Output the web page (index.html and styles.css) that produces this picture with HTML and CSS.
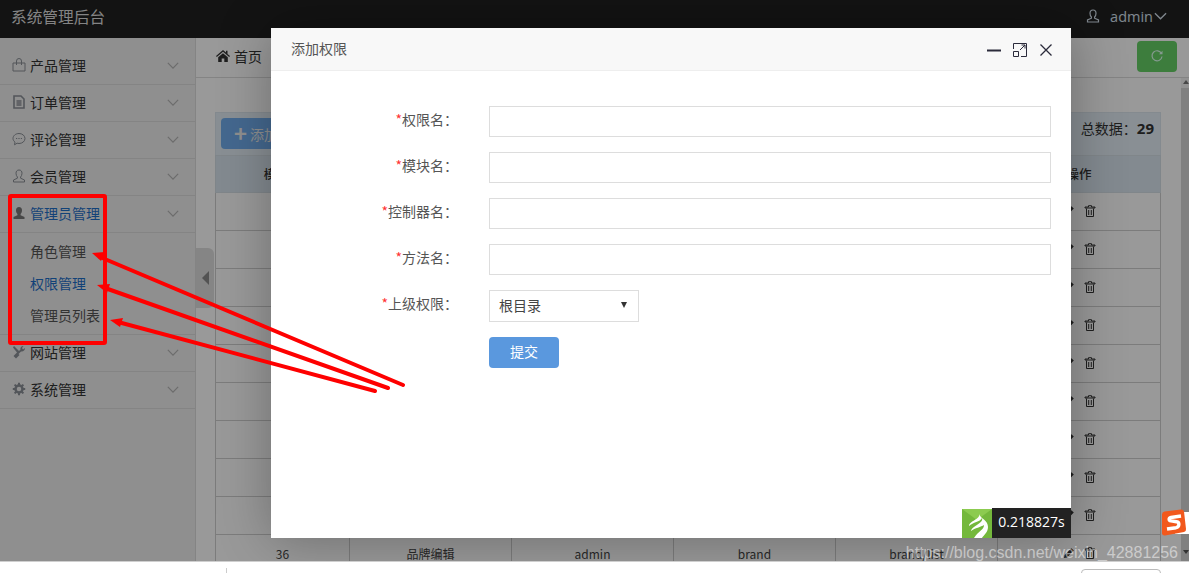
FILE: index.html
```html
<!DOCTYPE html>
<html lang="zh-CN">
  <head>
    <meta charset="UTF-8" />
    <meta name="viewport" content="width=device-width, initial-scale=1.0" />
    <title>系统管理后台</title>
    <link rel="stylesheet" href="styles.css">
  </head>
  <body>
    <svg class="defs" width="0" height="0">
      <symbol id="chev" viewBox="0 0 14 8"><path d="M1 1l6 6 6-6" fill="none" stroke="currentColor" stroke-width="1.400" /></symbol>
      <symbol id="edit" viewBox="0 0 12 12"><path d="M1 11l.6-3L8.4 1.200l2.400 2.400L4 10.400z" fill="currentColor" /></symbol>
      <symbol id="trash" viewBox="0 0 12 12"><path d="M4.500.7h3V2H11v1H1V2h3.500zM2.500 3.500v8h7v-8M4.700 5v5M7.300 5v5" fill="none" stroke="currentColor" /></symbol>
    </svg>

    <div class="page">
      <header class="topbar">
        <div class="brand">系统管理后台</div>
        <div class="user">
          <svg class="user-icon" viewBox="0 0 14 14"><path d="M7 1c-2 0-3 1.400-3 3.200 0 1.600.6 3 1.400 3.800v1.200L1.500 11v2h11v-2L8.600 9.200V8c.8-.8 1.400-2.200 1.400-3.800C10 2.400 9 1 7 1z" fill="none" stroke="currentColor" stroke-width="1.200" /></svg>
          <span>admin</span>
          <svg class="user-chev"><use href="#chev" /></svg>
        </div>
      </header>

      <div class="layout">
        <nav class="sidebar">
          <div class="menu-item">
            <svg class="menu-icon" viewBox="0 0 14 14"><path d="M1 5h12v8H1zM4.500 7V3a2.500 2.500 0 0 1 5 0v4" fill="none" stroke="currentColor" /></svg>
            <span>产品管理</span><svg class="chev"><use href="#chev" /></svg>
          </div>
          <div class="menu-item">
            <svg class="menu-icon" viewBox="0 0 14 14"><path d="M2 1h7l3 3v9H2zM4.500 6h5M4.500 8h5M4.500 10h5" fill="none" stroke="currentColor" stroke-width="1.600" /></svg>
            <span>订单管理</span><svg class="chev"><use href="#chev" /></svg>
          </div>
          <div class="menu-item">
            <svg class="menu-icon" viewBox="0 0 14 14"><path d="M7 1.500c3.300 0 6 2.200 6 5s-2.700 5-6 5c-.7 0-1.300-.1-1.900-.3L2.500 12.800l.5-2.700C1.800 9.200 1 7.900 1 6.500c0-2.800 2.700-5 6-5z" fill="none" stroke="currentColor" /><path d="M4 6.500h1.200M6.400 6.500h1.200M8.800 6.500H10" stroke="currentColor" /></svg>
            <span>评论管理</span><svg class="chev"><use href="#chev" /></svg>
          </div>
          <div class="menu-item">
            <svg class="menu-icon" viewBox="0 0 14 14"><path d="M7 1c-2 0-3 1.400-3 3.200 0 1.600.6 3 1.400 3.800v1.200L1.500 11v2h11v-2L8.600 9.200V8c.8-.8 1.400-2.200 1.400-3.800C10 2.400 9 1 7 1z" fill="none" stroke="currentColor" /></svg>
            <span>会员管理</span><svg class="chev"><use href="#chev" /></svg>
          </div>
          <div class="menu-group">
            <div class="menu-item menu-open">
              <svg class="menu-icon" viewBox="0 0 14 14"><path d="M7 1c-2 0-3 1.400-3 3.200 0 1.600.6 3 1.400 3.800v1.200L1.500 11v2h11v-2L8.600 9.200V8c.8-.8 1.400-2.200 1.400-3.800C10 2.400 9 1 7 1z" fill="currentColor" /></svg>
              <span>管理员管理</span><svg class="chev"><use href="#chev" /></svg>
            </div>
            <ul class="submenu">
              <li>角色管理</li>
              <li class="sub-active">权限管理</li>
              <li>管理员列表</li>
            </ul>
          </div>
          <div class="menu-item">
            <svg class="menu-icon" viewBox="0 0 14 14"><path d="M2 1l5 5 1.500-1.500C8 3 9 1 11.500 1L10 3l1 1.500L13 3c0 2.500-2 4-4 3.500L6.500 9l1 1L4 13.500 1.500 11 5 7.500 1 2.500z" fill="currentColor" /></svg>
            <span>网站管理</span><svg class="chev"><use href="#chev" /></svg>
          </div>
          <div class="menu-item">
            <svg class="menu-icon" viewBox="0 0 14 14"><circle cx="7" cy="7" r="3.500" fill="none" stroke="currentColor" stroke-width="2.500" /><path d="M7 .8v2.400M7 10.800v2.400M.8 7h2.400M10.800 7h2.400M2.600 2.600l1.700 1.700M9.700 9.700l1.700 1.700M2.600 11.400l1.700-1.700M9.700 4.300l1.700-1.700" stroke="currentColor" stroke-width="2" /></svg>
            <span>系统管理</span><svg class="chev"><use href="#chev" /></svg>
          </div>
        </nav>

        <main class="main">
          <div class="crumbs">
            <svg class="home" viewBox="0 0 14 12"><path d="M7 0L0 6l.8.900L7 1.700l6.200 5.200L14 6 11.500 3.900V.8H10v1.800zM2.200 7.200V12h3.500V8.500h2.600V12h3.500V7.200L7 3.200z" fill="currentColor" /></svg>
            <span>首页</span>
            <button class="refresh">
              <svg viewBox="0 0 14 14"><path d="M11.500 4.500A5 5 0 1 0 12 7.500" fill="none" stroke="currentColor" stroke-width="1.200" /><path d="M12.500 1.800v3.400H9z" fill="currentColor" /></svg>
            </button>
          </div>
          <div class="content-row">
            <div class="content">
              <div class="toolbar">
                <button class="add-btn"><b>+</b> 添加权限</button>
                <div class="count">总数据：<b>29</b></div>
              </div>
              <table class="grid">
                <colgroup>
                  <col class="col-id" /><col class="col" /><col class="col" /><col class="col" /><col class="col" /><col />
                </colgroup>
                <thead>
                  <tr><th>模块名</th><th></th><th></th><th></th><th></th><th class="th-ops">操作</th></tr>
                </thead>
                <tbody>
                  <tr><td></td><td></td><td></td><td></td><td></td><td class="ops"><svg><use href="#edit" /></svg><svg><use href="#trash" /></svg></td></tr>
                  <tr><td></td><td></td><td></td><td></td><td></td><td class="ops"><svg><use href="#edit" /></svg><svg><use href="#trash" /></svg></td></tr>
                  <tr><td></td><td></td><td></td><td></td><td></td><td class="ops"><svg><use href="#edit" /></svg><svg><use href="#trash" /></svg></td></tr>
                  <tr><td></td><td></td><td></td><td></td><td></td><td class="ops"><svg><use href="#edit" /></svg><svg><use href="#trash" /></svg></td></tr>
                  <tr><td></td><td></td><td></td><td></td><td></td><td class="ops"><svg><use href="#edit" /></svg><svg><use href="#trash" /></svg></td></tr>
                  <tr><td></td><td></td><td></td><td></td><td></td><td class="ops"><svg><use href="#edit" /></svg><svg><use href="#trash" /></svg></td></tr>
                  <tr><td></td><td></td><td></td><td></td><td></td><td class="ops"><svg><use href="#edit" /></svg><svg><use href="#trash" /></svg></td></tr>
                  <tr><td></td><td></td><td></td><td></td><td></td><td class="ops"><svg><use href="#edit" /></svg><svg><use href="#trash" /></svg></td></tr>
                  <tr><td></td><td></td><td></td><td></td><td></td><td class="ops"><svg><use href="#edit" /></svg><svg><use href="#trash" /></svg></td></tr>
                  <tr class="row-cut"><td>36</td><td>品牌编辑</td><td>admin</td><td>brand</td><td>brand/list</td><td class="ops"><svg><use href="#edit" /></svg><svg><use href="#trash" /></svg></td></tr>
                </tbody>
              </table>
            </div>
            <div class="scrollbar"><i></i><div class="thumb"></div></div>
          </div>
          <div class="collapse-tab"><i></i></div>
        </main>
      </div>
    </div>

    <div class="mask"></div>

    <section class="modal">
      <div class="modal-head">
        <span>添加权限</span>
        <div class="modal-tools">
          <svg viewBox="0 0 14 14"><path d="M0 7.500h14" stroke="currentColor" stroke-width="2" /></svg>
          <svg viewBox="0 0 14 14"><path d="M.5 6V.5h13v13H8M.5 8.500h5v5h-5zM7 7l5-5M8.500 2H12v3.500" fill="none" stroke="currentColor" /></svg>
          <svg viewBox="0 0 14 14"><path d="M1.500 1.500l11 11M12.500 1.500l-11 11" stroke="currentColor" stroke-width="1.300" /></svg>
        </div>
      </div>
      <form class="perm-form">
        <label class="field"><span class="field-name"><em>*</em>权限名：</span><input type="text" /></label>
        <label class="field"><span class="field-name"><em>*</em>模块名：</span><input type="text" /></label>
        <label class="field"><span class="field-name"><em>*</em>控制器名：</span><input type="text" /></label>
        <label class="field"><span class="field-name"><em>*</em>方法名：</span><input type="text" /></label>
        <label class="field"><span class="field-name"><em>*</em>上级权限：</span>
          <span class="select">根目录<i></i></span>
        </label>
        <button type="button" class="submit">提交</button>
      </form>
    </section>

    <div class="timer">
      <svg class="timer-logo" viewBox="0 0 30 29">
        <path d="M0 0h30v29H0z" fill="#74b83c" />
        <path d="M0 0l15 11L30 0z" fill="#8ccb50" />
        <path d="M17 5c2 5-10 7-10 12 4-4 11-4 13-8 2 5-10 8-11 13 4-3 10-4 13-6 0 5-6 6-10 13h8c2-3 6-6 6-11 0-7-7-8-9-13z" fill="#fff" />
      </svg>
      <span>0.218827s</span>
    </div>

    <div class="sogou">
      <svg viewBox="0 0 30 27">
        <path d="M16 3h14v22H16z" fill="#fff" />
        <path d="M3 5.500Q3 3 5.500 2.500L22 .5Q24.500.3 25 2.500L27 20q.3 2.500-2 3L6 26.500Q3.500 27 3 24.500z" fill="#f2581c" />
        <path d="M22 7L12 8.500c-2.500.5-2.500 3 0 3.400l5.500.8c3.500.7 3 5.300-.5 6L8 20" fill="none" stroke="#fff" stroke-width="3.400" />
      </svg>
    </div>

    <div class="watermark">https://blog.csdn.net/weixin_42881256</div>
    <i class="corner-arrow"></i>

    <div class="bottom-bar"><i class="bottom-tick"></i><i class="bottom-box"></i></div>

    <!-- red marks drawn on top of the shot -->
    <svg class="marks" viewBox="0 0 1189 573">
      <rect x="10" y="196" width="95" height="147" rx="1" fill="none" stroke="#fe0000" stroke-width="4" />
      <g stroke="#fe0000" stroke-width="4" stroke-linecap="round">
        <path d="M403 385L100 257" />
        <path d="M388 388L105 288" />
        <path d="M375 391L118 322" />
      </g>
      <g fill="#fe0000">
        <path d="M92 253l13-1-4 9z" />
        <path d="M97 285l13-1-3 9z" />
        <path d="M110 320l13-2-3 9z" />
      </g>
    </svg>
  </body>
</html>
```

FILE: styles.css
```css
* {
  box-sizing: border-box;
}

body {
  margin: 0;
  height: 573px;
  overflow: hidden;
  position: relative;
  background-color: #fff;
  font-family: "Noto Sans CJK SC", "Noto Sans", sans-serif;
  font-size: 14px;
  color: #333;
}

.defs {
  position: absolute;
}

.page {
  height: 561px;
  display: flex;
  flex-direction: column;
  overflow: hidden;
}

.topbar {
  height: 38px;
  flex: none;
  display: flex;
  justify-content: space-between;
  align-items: center;
  padding: 0 22px 6px 11px;
  background-color: #212121;
  color: #ddd;
}

.brand {
  font-size: 15.7px;
}

.user {
  display: flex;
  align-items: center;
  font-family: "Open Sans", sans-serif;
  font-size: 14.5px;
  color: #d6e2ee;
}

.user-icon {
  width: 14px;
  height: 14px;
  margin-right: 10px;
}

.user-chev {
  width: 13px;
  height: 8px;
  margin-left: 1px;
}

.layout {
  flex: 1;
  display: flex;
  min-height: 0;
}

.sidebar {
  width: 196px;
  flex: none;
  padding-top: 10px;
  background-color: #eeeeee;
  border-right: 1px solid #dcdcdc;
}

.menu-item {
  height: 37px;
  display: flex;
  align-items: center;
  padding: 0 16px 2px 12px;
  border-bottom: 1px solid #dddddd;
}

.menu-item span {
  margin-left: 4px;
  flex: 1;
}

.menu-icon {
  width: 14px;
  height: 14px;
  color: #8a8f96;
}

.chev {
  width: 12px;
  height: 7px;
  color: #b4b4b4;
}

.menu-open {
  color: #1f6fc9;
}

.menu-open .menu-icon {
  color: #777;
}

.menu-open .chev {
  color: #b4b4b4;
}

.submenu {
  list-style: none;
  margin: 0;
  padding: 2px 0 2px 30px;
  height: 102px;
  border-bottom: 1px solid #dddddd;
}

.submenu li {
  height: 32px;
  line-height: 32px;
  color: #555;
}

.submenu .sub-active {
  color: #1f6fc9;
}

.main {
  flex: 1;
  min-width: 0;
  display: flex;
  flex-direction: column;
  position: relative;
  background-color: #fff;
}

.crumbs {
  height: 40px;
  flex: none;
  display: flex;
  align-items: center;
  padding: 0 12px 3px 20px;
  border-bottom: 1px solid #dcdcdc;
}

.home {
  width: 14px;
  height: 12px;
  margin-right: 4px;
}

.refresh {
  width: 40px;
  height: 31px;
  margin-left: auto;
  padding: 0;
  border: none;
  border-radius: 4px;
  background-color: #66d066;
  color: #dfe;
  display: flex;
  align-items: center;
  justify-content: center;
}

.refresh svg {
  width: 14px;
  height: 14px;
}

.content-row {
  flex: 1;
  min-height: 0;
  display: flex;
}

.content {
  flex: 1;
  min-width: 0;
  padding: 34px 20px 0 19px;
}

.scrollbar {
  width: 8px;
  flex: none;
  background-color: #f4f4f4;
  position: relative;
}

.scrollbar i {
  position: absolute;
  top: 2px;
  left: 2px;
  border-left: 3px solid transparent;
  border-right: 3px solid transparent;
  border-bottom: 4px solid #777;
}

.thumb {
  margin-top: 10px;
  height: 500px;
  background-color: #d5d5d5;
}

.toolbar {
  height: 43px;
  display: flex;
  justify-content: space-between;
  padding: 5px 6px 0 5px;
  background-color: #e4eff7;
  border: 1px solid #dde6ee;
  border-bottom: none;
}

.add-btn {
  height: 31px;
  width: 100px;
  padding: 0 0 3px 13px;
  border: none;
  border-radius: 4px;
  background-color: #72aeef;
  color: #eee;
  font: 14px "Noto Sans CJK SC", sans-serif;
  text-align: left;
}

.add-btn b {
  font-size: 22px;
  line-height: 1;
  vertical-align: -2px;
}

.count {
  line-height: 20px;
}

.count b {
  font-family: "Open Sans", sans-serif;
  font-size: 15px;
}

.grid {
  width: 946px;
  table-layout: fixed;
  border-collapse: collapse;
  text-align: center;
}

.col-id {
  width: 134px;
}

.col {
  width: 162px;
}

.grid th {
  height: 37px;
  padding: 0 0 2px;
  font-weight: 500;
  font-size: 12.5px;
  background-color: #dbe7f0;
  border: 1px solid #d5dfe6;
}

.grid td {
  height: 38px;
  padding: 0;
  font-size: 12px;
  color: #444;
  border: 1px solid #cfcfcf;
}

.grid .ops {
  padding-bottom: 6px;
}

.ops svg {
  width: 12px;
  height: 12px;
  margin: 0 4.5px;
  color: #333;
  vertical-align: middle;
}

.collapse-tab {
  position: absolute;
  left: 0;
  top: 210px;
  width: 18px;
  height: 60px;
  background-color: #dedede;
  border-radius: 0 6px 6px 0;
  display: flex;
  align-items: center;
  justify-content: center;
}

.collapse-tab i {
  border-top: 7px solid transparent;
  border-bottom: 7px solid transparent;
  border-right: 7px solid #8a8a8a;
}

.mask {
  position: absolute;
  left: 0;
  top: 0;
  right: 0;
  height: 561px;
  background-color: rgba(0, 0, 0, 0.4);
}

.modal {
  position: absolute;
  left: 271px;
  top: 28px;
  width: 800px;
  height: 510px;
  background-color: #fff;
  box-shadow: 1px 1px 50px rgba(0, 0, 0, 0.3);
}

.modal-head {
  height: 43px;
  display: flex;
  justify-content: space-between;
  align-items: center;
  padding: 0 18px 0 20px;
  background-color: #f8f8f8;
  border-bottom: 1px solid #eee;
  font-size: 14px;
  color: #555;
}

.modal-head span {
  margin-bottom: 3px;
}

.modal-tools {
  display: flex;
  gap: 12px;
  color: #2b2b3b;
  margin-top: 2px;
}

.modal-tools svg {
  width: 14px;
  height: 14px;
}

.perm-form {
  padding: 35px 20px 0 218px;
}

.field {
  display: flex;
  align-items: flex-start;
  margin-bottom: 15px;
  margin-left: -218px;
}

.field-name {
  width: 218px;
  padding: 3px 31px 0 0;
  text-align: right;
  font-size: 14px;
  color: #555;
}

.field-name em {
  font-style: normal;
  color: #f33;
}

.field input {
  flex: 1;
  height: 31px;
  padding: 0 8px;
  border: 1px solid #ddd;
  background-color: #fff;
  outline: none;
}

.select {
  width: 150px;
  height: 32px;
  display: flex;
  justify-content: space-between;
  align-items: center;
  padding: 0 11px 3px 9px;
  border: 1px solid #ddd;
  font-size: 14px;
  color: #444;
}

.select i {
  border-left: 3px solid transparent;
  border-right: 3px solid transparent;
  border-top: 6px solid #333;
}

.submit {
  display: block;
  width: 70px;
  height: 31px;
  padding: 0 0 3px;
  border: none;
  border-radius: 4px;
  background-color: #5a98de;
  color: #fff;
  font: 14px "Noto Sans CJK SC", sans-serif;
}

.timer {
  position: absolute;
  left: 962px;
  top: 508px;
  height: 30px;
  width: 109px;
  display: flex;
  align-items: flex-end;
  font-family: "Open Sans", sans-serif;
  font-size: 14px;
  color: #fff;
}

.timer-logo {
  width: 30px;
  height: 29px;
}

.timer span {
  flex: 1;
  height: 30px;
  background-color: #222;
  line-height: 28px;
  text-align: center;
}

.sogou {
  position: absolute;
  left: 1159px;
  top: 509px;
  width: 30px;
  height: 27px;
}

.sogou svg {
  width: 30px;
  height: 27px;
  display: block;
}

.watermark {
  position: absolute;
  right: 11px;
  top: 543px;
  font-family: "Liberation Sans", sans-serif;
  font-size: 16px;
  line-height: 20px;
  color: rgba(255, 255, 255, 0.5);
}

.corner-arrow {
  position: absolute;
  left: 1183px;
  top: 550px;
  border-left: 3px solid transparent;
  border-right: 3px solid transparent;
  border-top: 4px solid #333;
}

.bottom-bar {
  position: absolute;
  left: 0;
  right: 0;
  top: 561px;
  height: 12px;
  background-color: #fff;
  border-top: 1px solid #cfcfcf;
}

.bottom-tick {
  position: absolute;
  left: 226px;
  top: 6px;
  width: 1px;
  height: 6px;
  background-color: #ccc;
}

.bottom-box {
  position: absolute;
  left: 1081px;
  top: 7px;
  width: 80px;
  height: 12px;
  border: 1px solid #bbb;
  border-radius: 4px;
}

.marks {
  position: absolute;
  left: 0;
  top: 0;
  width: 1189px;
  height: 573px;
  pointer-events: none;
}
```
